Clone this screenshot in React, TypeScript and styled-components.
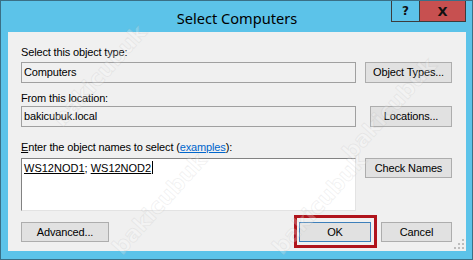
import React from "react";
import styled, { createGlobalStyle } from "styled-components";

const Global = createGlobalStyle`
  html, body { margin: 0; padding: 0; background: #ffffff; }
  body { font-family: "Liberation Sans", Arial, sans-serif; }
  * { box-sizing: border-box; }
`;

const Window = styled.div`
  position: relative;
  width: 473px;
  height: 260px;
  background: #5cc3e9;
  border: 1px solid #3a6f86;
  padding: 0 6px 8px 7px;
  display: flex;
  flex-direction: column;
  overflow: hidden;
`;

const TitleBar = styled.div`
  position: relative;
  height: 31px;
  display: flex;
  align-items: center;
  justify-content: center;
`;

const Title = styled.div`
  font-family: "Noto Sans", "Open Sans", sans-serif;
  font-size: 14.6px;
  color: #000;
  padding-top: 2px;
`;

const Caption = styled.div`
  position: absolute;
  top: -1px;
  right: 0;
  display: flex;
`;

const CapButton = styled.div<{ $close?: boolean }>`
  width: ${(p) => (p.$close ? "46px" : "29px")};
  height: 22px;
  background: ${(p) => (p.$close ? "#c75050" : "#5cc3e9")};
  border: 1px solid #3c3c3c;
  border-left-width: ${(p) => (p.$close ? "0" : "1px")};
  display: flex;
  align-items: center;
  justify-content: center;
  font-family: "DejaVu Sans", sans-serif;
  font-weight: bold;
  font-size: ${(p) => (p.$close ? "13px" : "12px")};
  color: #111;
`;

const Client = styled.div`
  flex: 1;
  background: #f0f0f0;
  padding: 14px 14px 0 13px;
  display: flex;
  flex-direction: column;
  font-size: 11px;
  line-height: 13px;
  letter-spacing: -0.15px;
  color: #000;
  position: relative;
`;

const Label = styled.div<{ $mt?: number; $mb?: number }>`
  margin-top: ${(p) => p.$mt ?? 0}px;
  margin-bottom: ${(p) => p.$mb ?? 0}px;
  height: 13px;
  white-space: nowrap;
`;

const Row = styled.div<{ $top?: boolean }>`
  display: flex;
  justify-content: space-between;
  align-items: ${(p) => (p.$top ? "flex-start" : "center")};
`;

const Field = styled.div`
  width: 335px;
  height: 21px;
  border: 1px solid #a0a0a0;
  background: #f0f0f0;
  padding: 3px 2px 0;
  white-space: nowrap;
`;

const NamesBox = styled.div`
  width: 335px;
  height: 53px;
  background: #ffffff;
  border-style: solid;
  border-width: 1px;
  border-color: #828282 #e3e3e3 #e3e3e3 #828282;
  padding: 2px 2px 0;
  white-space: nowrap;
  letter-spacing: 0;
`;

const Button = styled.div<{ $w: number; $h?: number; $default?: boolean }>`
  position: relative;
  width: ${(p) => p.$w}px;
  height: ${(p) => p.$h ?? 20}px;
  background: #e1e1e1;
  border: 1px solid ${(p) => (p.$default ? "#3d7fba" : "#adadad")};
  display: flex;
  align-items: center;
  justify-content: center;
  white-space: nowrap;
`;

const Highlight = styled.div`
  position: absolute;
  top: -8px;
  left: -6px;
  right: -7px;
  bottom: -7px;
  border: 3px solid #b0141c;
  pointer-events: none;
`;

const BottomRow = styled.div`
  margin-top: 11px;
  display: flex;
  align-items: center;
`;

const RightButtons = styled.div`
  margin-left: auto;
  display: flex;
  gap: 10px;
`;

const U = styled.span`
  text-decoration: underline;
`;

const Link = styled.span`
  color: #0066cc;
  text-decoration: underline;
`;

const Caret = styled.span`
  display: inline-block;
  width: 1px;
  height: 13px;
  background: #000;
  vertical-align: -2px;
  margin-left: 1px;
`;

const Grip = styled.svg`
  position: absolute;
  right: 2px;
  bottom: 2px;
`;

const Watermark = styled.div`
  position: absolute;
  font-family: "DejaVu Sans", sans-serif;
  font-weight: bold;
  font-size: 22px;
  line-height: 26px;
  color: rgba(255, 255, 255, 0.22);
  -webkit-text-stroke: 1px rgba(170, 170, 170, 0.16);
  transform: rotate(-48deg);
  transform-origin: center;
  pointer-events: none;
  white-space: nowrap;
`;

const marks = [
  { x: 35, y: 62 },
  { x: 325, y: 95 },
  { x: 95, y: 190 },
  { x: 255, y: 190 },
];

export default function App() {
  return (
    <>
      <Global />
      <Window>
        <TitleBar>
          <Title>Select Computers</Title>
          <Caption>
            <CapButton>?</CapButton>
            <CapButton $close>X</CapButton>
          </Caption>
        </TitleBar>
        <Client>
          <Label $mb={3}>Select this object type:</Label>
          <Row>
            <Field>Computers</Field>
            <Button $w={87} $h={21}>Object Types...</Button>
          </Row>
          <Label $mt={9} $mb={1}>From this location:</Label>
          <Row>
            <Field>bakicubuk.local</Field>
            <Button $w={82} $h={21}>Locations...</Button>
          </Row>
          <Label $mt={14} $mb={4}>
            <U>E</U>nter the object names to select (<Link>examples</Link>):
          </Label>
          <Row $top>
            <NamesBox>
              <U>WS12NOD1</U>; <U>WS12NOD2</U>
              <Caret />
            </NamesBox>
            <Button $w={87}>Check Names</Button>
          </Row>
          <BottomRow>
            <Button $w={88}>Advanced...</Button>
            <RightButtons>
              <Button $w={72} $default>
                OK
                <Highlight />
              </Button>
              <Button $w={71}>Cancel</Button>
            </RightButtons>
          </BottomRow>
          <Grip width="10" height="10" viewBox="0 0 10 10">
            <rect x="8" y="0" width="2" height="2" fill="#bdbdbd" />
            <rect x="4" y="4" width="2" height="2" fill="#bdbdbd" />
            <rect x="8" y="4" width="2" height="2" fill="#bdbdbd" />
            <rect x="0" y="8" width="2" height="2" fill="#bdbdbd" />
            <rect x="4" y="8" width="2" height="2" fill="#bdbdbd" />
            <rect x="8" y="8" width="2" height="2" fill="#bdbdbd" />
          </Grip>
        </Client>
        {marks.map((m, i) => (
          <Watermark key={i} style={{ left: m.x, top: m.y }}>
            bakicubuk
          </Watermark>
        ))}
      </Window>
    </>
  );
}
